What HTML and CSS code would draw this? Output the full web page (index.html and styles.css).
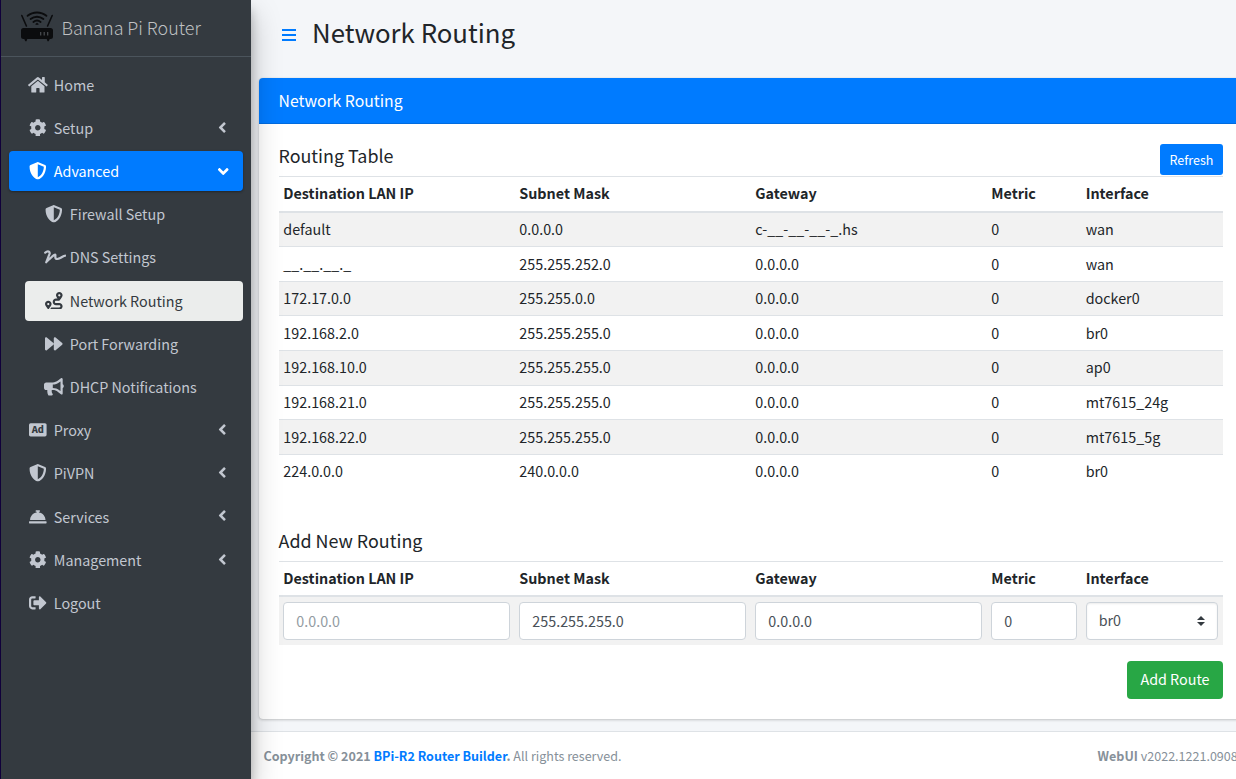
FILE: index.html
```html
<!DOCTYPE html>
<html lang="en">
<head>
<meta charset="utf-8">
<title>Network Routing</title>
<link rel="stylesheet" href="styles.css">
</head>
<body>
<svg class="sprite" aria-hidden="true">
  <symbol id="cog" viewBox="0 0 512 512"><path d="M487.4 315.7l-42.6-24.6c4.3-23.2 4.3-47 0-70.2l42.6-24.6c4.9-2.8 7.1-8.6 5.5-14-11.1-35.6-30-67.8-54.7-94.6-3.8-4.1-10-5.1-14.8-2.3L380.8 110c-17.9-15.4-38.5-27.3-60.8-35.1V25.8c0-5.6-3.9-10.5-9.4-11.7-36.7-8.2-74.3-7.8-109.2 0-5.5 1.2-9.4 6.1-9.4 11.7V75c-22.2 7.9-42.8 19.8-60.8 35.1L88.7 85.5c-4.9-2.8-11-1.9-14.8 2.3-24.7 26.7-43.6 58.9-54.7 94.6-1.7 5.4.6 11.2 5.5 14L67.3 221c-4.3 23.2-4.3 47 0 70.2l-42.6 24.6c-4.9 2.8-7.1 8.6-5.5 14 11.1 35.6 30 67.8 54.7 94.6 3.8 4.1 10 5.1 14.8 2.3l42.6-24.6c17.9 15.4 38.5 27.3 60.8 35.1v49.2c0 5.6 3.9 10.5 9.4 11.7 36.7 8.2 74.3 7.8 109.2 0 5.5-1.2 9.4-6.1 9.4-11.7v-49.2c22.2-7.9 42.8-19.8 60.8-35.1l42.6 24.6c4.9 2.8 11 1.9 14.8-2.3 24.7-26.7 43.6-58.9 54.7-94.6 1.5-5.5-.7-11.3-5.6-14.1zM256 336c-44.1 0-80-35.9-80-80s35.9-80 80-80 80 35.9 80 80-35.9 80-80 80z"/></symbol>
  <symbol id="shield" viewBox="0 0 512 512"><path d="M466.5 83.7l-192-80a48.15 48.15 0 0 0-36.9 0l-192 80C27.7 91.1 16 108.6 16 128c0 198.5 114.5 335.7 221.5 380.3 11.8 4.9 25.1 4.9 36.9 0C360.1 472.6 496 349.3 496 128c0-19.4-11.7-36.9-29.5-44.3zM256.1 446.3l-.1-381 175.9 73.3c-3.3 151.4-82.1 261.1-175.8 307.7z"/></symbol>
  <symbol id="angle" viewBox="0 0 256 512"><path d="M31.7 239l136-136c9.4-9.4 24.6-9.4 33.9 0l22.6 22.6c9.4 9.4 9.4 24.6 0 33.9L127.9 256l96.4 96.4c9.4 9.4 9.4 24.6 0 33.9L201.7 409c-9.4 9.4-24.6 9.4-33.9 0l-136-136c-9.5-9.4-9.5-24.6-.1-34z"/></symbol>
</svg>
<div class="app">
  <aside class="sidebar">
    <a class="brand">
      <svg class="logo" viewBox="0 0 34 34">
        <g fill="none" stroke="#0b0c0e" stroke-linecap="round">
          <path stroke-width="1.6" d="M1.8 5.5l4.6 10.5M32.2 5.5l-4.6 10.5"/>
          <path stroke-width="1.9" d="M7.6 5.8c5.4-4.5 13.4-4.5 18.8 0M10.6 9c3.8-3.1 9-3.1 12.8 0M13.4 12c2.1-1.7 5.1-1.7 7.2 0"/>
        </g>
        <path fill="#0b0c0e" d="M17 12.7l2 1.6-2 .8-2-.8zM3.5 18h27a2.500 2.500 0 0 1 2.500 2.500v6a2.500 2.500 0 0 1-2.500 2.500h-.8l-1 2.200h-1.200l-.8-2.200H7.300l-.8 2.200H5.300l-1-2.200h-.8A2.500 2.500 0 0 1 1 26.500v-6A2.500 2.500 0 0 1 3.500 18z"/>
        <path stroke="#4b4e53" stroke-width="1.2" d="M20.7 22v3.4M24.2 22v3.4M27.7 22v3.4"/>
      </svg>
      <span class="brand-text">Banana Pi Router</span>
    </a>
    <nav class="nav">
      <a class="item"><span class="icon"><svg class="wide" viewBox="0 0 576 512"><path d="M280.37 148.26L96 300.11V464a16 16 0 0 0 16 16l112.06-.29a16 16 0 0 0 15.92-16V368a16 16 0 0 1 16-16h64a16 16 0 0 1 16 16v95.64a16 16 0 0 0 16 16.05L464 480a16 16 0 0 0 16-16V300L295.67 148.26a12.19 12.19 0 0 0-15.3 0zM571.6 251.47L488 182.56V44.05a12 12 0 0 0-12-12h-56a12 12 0 0 0-12 12v72.61L318.47 43a48 48 0 0 0-61 0L4.34 251.47a12 12 0 0 0-1.6 16.9l25.5 31A12 12 0 0 0 45.15 301l235.22-193.74a12.19 12.19 0 0 1 15.3 0L530.9 301a12 12 0 0 0 16.9-1.6l25.5-31a12 12 0 0 0-1.7-16.93z"/></svg></span><span class="label">Home</span></a>
      <a class="item"><span class="icon"><svg><use href="#cog"/></svg></span><span class="label">Setup</span><svg class="angle"><use href="#angle"/></svg></a>
      <a class="item active"><span class="icon"><svg><use href="#shield"/></svg></span><span class="label">Advanced</span><svg class="angle open"><use href="#angle"/></svg></a>
      <div class="sub">
        <a class="item"><span class="icon"><svg><use href="#shield"/></svg></span><span class="label">Firewall Setup</span></a>
        <a class="item"><span class="icon"><svg class="xwide" viewBox="0 0 640 512"><path d="M623.2 192c-51.8 3.5-125.7 54.7-163.1 71.5-29.1 13.1-54.2 24.4-76.1 24.4-22.6 0-26-16.2-21.3-51.9 1.1-8 11.7-79.2-42.7-76.1-25.1 1.5-64.3 24.8-169.5 126L192 182.2c30.4-75.9-53.2-151.5-129.7-102.8L7.4 116.3C0 121-2.2 130.9 2.5 138.4l17.2 27c4.7 7.5 14.6 9.7 22.1 4.9l58-38.9c18.4-11.7 40.7 7.2 32.7 27.1L34.3 404.1C27.5 421 37 448 64 448c8.3 0 16.5-3.2 22.6-9.4 42.2-42.2 154.7-150.7 211.2-195.8-2.2 28.5-2.1 58.9 20.6 83.8 15.3 16.8 37.3 25.3 65.5 25.3 35.6 0 68-14.6 102.3-30 33-14.8 99-62.6 138.4-65.8 8.5-.7 15.2-7.3 15.2-15.8v-32.1c.2-9.1-7.5-16.8-16.6-16.2z"/></svg></span><span class="label">DNS Settings</span></a>
        <a class="item current"><span class="icon"><svg viewBox="0 0 512 512"><path d="M416 320h-96c-17.6 0-32-14.4-32-32s14.4-32 32-32h96s96-107 96-160-43-96-96-96-96 43-96 96c0 25.5 22.2 63.4 45.3 96H320c-52.9 0-96 43.1-96 96s43.1 96 96 96h96c17.6 0 32 14.4 32 32s-14.4 32-32 32H185.5c-16 24.8-33.8 47.7-47.3 64H416c52.9 0 96-43.1 96-96s-43.1-96-96-96zm0-256c17.7 0 32 14.3 32 32s-14.3 32-32 32-32-14.3-32-32 14.3-32 32-32zM96 256c-53 0-96 43-96 96s96 160 96 160 96-107 96-160-43-96-96-96zm0 128c-17.7 0-32-14.3-32-32s14.3-32 32-32 32 14.3 32 32-14.3 32-32 32z"/></svg></span><span class="label">Network Routing</span></a>
        <a class="item"><span class="icon"><svg viewBox="0 0 512 512"><path d="M500.5 231.4l-192-160C287.9 54.3 256 68.6 256 96v320c0 27.4 31.9 41.8 52.5 24.6l192-160c15.3-12.8 15.3-36.4 0-49.2zm-256 0l-192-160C31.9 54.3 0 68.6 0 96v320c0 27.4 31.9 41.8 52.5 24.6l192-160c15.3-12.8 15.3-36.4 0-49.2z"/></svg></span><span class="label">Port Forwarding</span></a>
        <a class="item"><span class="icon"><svg class="wide" viewBox="0 0 576 512"><path d="M576 240c0-23.63-12.95-44.04-32-55.12V32.01C544 23.26 537.02 0 512 0c-7.12 0-14.19 2.38-19.98 7.02l-85.03 68.03C364.28 109.19 310.66 128 256 128H64c-35.35 0-64 28.65-64 64v96c0 35.35 28.65 64 64 64h33.7c-1.39 10.48-2.18 21.14-2.18 32 0 39.77 9.26 77.35 25.56 110.94 5.19 10.69 16.52 17.06 28.4 17.06h74.28c26.05 0 41.69-29.84 25.9-50.56-16.4-21.52-26.15-48.36-26.15-77.44 0-11.11 1.62-21.79 4.41-32H256c54.66 0 108.28 18.81 150.98 52.95l85.03 68.03a32.023 32.023 0 0 0 19.98 7.02c24.92 0 32-22.78 32-32V295.13C563.05 284.04 576 263.63 576 240zm-96 141.42l-33.05-26.44C392.95 311.78 325.12 288 256 288v-96c69.12 0 136.95-23.78 190.95-66.98L480 98.58v282.84z"/></svg></span><span class="label">DHCP Notifications</span></a>
      </div>
      <a class="item"><span class="icon"><svg viewBox="0 0 512 512"><path d="M48 64h416a48 48 0 0 1 48 48v288a48 48 0 0 1-48 48H48a48 48 0 0 1-48-48V112a48 48 0 0 1 48-48z"/><text class="ad" x="256" y="350" text-anchor="middle">Ad</text></svg></span><span class="label">Proxy</span><svg class="angle"><use href="#angle"/></svg></a>
      <a class="item"><span class="icon"><svg><use href="#shield"/></svg></span><span class="label">PiVPN</span><svg class="angle"><use href="#angle"/></svg></a>
      <a class="item"><span class="icon"><svg viewBox="0 0 512 512"><path d="M288 130.54V112h16c8.84 0 16-7.16 16-16V80c0-8.84-7.16-16-16-16h-96c-8.84 0-16 7.16-16 16v16c0 8.84 7.16 16 16 16h16v18.54C115.49 146.11 32 239.18 32 352h448c0-112.82-83.49-205.89-192-221.46zM496 384H16c-8.84 0-16 7.16-16 16v32c0 8.84 7.16 16 16 16h480c8.84 0 16-7.16 16-16v-32c0-8.84-7.16-16-16-16z"/></svg></span><span class="label">Services</span><svg class="angle"><use href="#angle"/></svg></a>
      <a class="item"><span class="icon"><svg><use href="#cog"/></svg></span><span class="label">Management</span><svg class="angle"><use href="#angle"/></svg></a>
      <a class="item"><span class="icon"><svg viewBox="0 0 512 512"><path d="M497 273L329 441c-15 15-41 4.5-41-17v-96H152c-13.3 0-24-10.7-24-24v-96c0-13.3 10.7-24 24-24h136V88c0-21.4 25.9-32 41-17l168 168c9.3 9.4 9.3 24.6 0 34zM192 436v-40c0-6.6-5.4-12-12-12H96c-17.7 0-32-14.3-32-32V160c0-17.7 14.3-32 32-32h84c6.6 0 12-5.4 12-12V76c0-6.6-5.4-12-12-12H96c-53 0-96 43-96 96v192c0 53 43 96 96 96h84c6.6 0 12-5.4 12-12z"/></svg></span><span class="label">Logout</span></a>
    </nav>
  </aside>
  <div class="page">
    <header class="page-head">
      <a class="burger"><i></i><i></i><i></i></a>
      <h1>Network Routing</h1>
    </header>
    <main class="card">
      <div class="card-head">Network Routing</div>
      <div class="card-body">
        <div class="title-row"><h5>Routing Table</h5><button class="btn small">Refresh</button></div>
        <table>
          <thead><tr><th class="w25">Destination LAN IP</th><th class="w25">Subnet Mask</th><th class="w25">Gateway</th><th class="w10">Metric</th><th class="w15">Interface</th></tr></thead>
          <tbody>
            <tr><td>default</td><td>0.0.0.0</td><td>c-__-__-__-_.hs</td><td>0</td><td>wan</td></tr>
            <tr><td>__.__.__._</td><td>255.255.252.0</td><td>0.0.0.0</td><td>0</td><td>wan</td></tr>
            <tr><td>172.17.0.0</td><td>255.255.0.0</td><td>0.0.0.0</td><td>0</td><td>docker0</td></tr>
            <tr><td>192.168.2.0</td><td>255.255.255.0</td><td>0.0.0.0</td><td>0</td><td>br0</td></tr>
            <tr><td>192.168.10.0</td><td>255.255.255.0</td><td>0.0.0.0</td><td>0</td><td>ap0</td></tr>
            <tr><td>192.168.21.0</td><td>255.255.255.0</td><td>0.0.0.0</td><td>0</td><td>mt7615_24g</td></tr>
            <tr><td>192.168.22.0</td><td>255.255.255.0</td><td>0.0.0.0</td><td>0</td><td>mt7615_5g</td></tr>
            <tr><td>224.0.0.0</td><td>240.0.0.0</td><td>0.0.0.0</td><td>0</td><td>br0</td></tr>
          </tbody>
        </table>
        <div class="title-row second"><h5>Add New Routing</h5></div>
        <table class="form">
          <thead><tr><th class="w25">Destination LAN IP</th><th class="w25">Subnet Mask</th><th class="w25">Gateway</th><th class="w10">Metric</th><th class="w15">Interface</th></tr></thead>
          <tbody>
            <tr>
              <td><input class="field" placeholder="0.0.0.0"></td>
              <td><input class="field" value="255.255.255.0"></td>
              <td><input class="field" value="0.0.0.0"></td>
              <td><input class="field" value="0"></td>
              <td><div class="field select"><span>br0</span><svg viewBox="0 0 4 5"><path d="M2 0L0 2h4zm0 5L0 3h4z"/></svg></div></td>
            </tr>
          </tbody>
        </table>
        <div class="actions"><button class="btn green">Add Route</button></div>
      </div>
    </main>
    <footer class="footer">
      <div><b>Copyright © 2021 <a>BPi-R2 Router Builder</a>.</b> All rights reserved.</div>
      <div><b>WebUI</b> v2022.1221.0908</div>
    </footer>
  </div>
</div>
</body>
</html>
```
FILE: styles.css
```css
* { box-sizing: border-box; }
body {
  margin: 0;
  overflow: hidden;
  background: #f4f6f9;
  color: #212529;
  font: 14.33px/24px "Noto Sans CJK SC", "Noto Sans", sans-serif;
}
.sprite { display: none; }
.app { display: flex; width: 1251px; height: 779px; }

.sidebar {
  flex: none;
  position: relative;
  z-index: 2;
  width: 251px;
  border-left: 1px solid #10003a;
  background: #343a40;
  color: #c2c7d0;
  box-shadow: 0 14px 28px rgba(0,0,0,.25), 0 10px 10px rgba(0,0,0,.22);
}
.brand {
  display: flex;
  align-items: center;
  height: 57px;
  padding-left: 19px;
  border-bottom: 1px solid #4b545c;
}
.logo { width: 34px; height: 34px; margin-top: -2px; }
.brand-text { margin: -2px 0 0 7.4px; font-size: 17.9px; font-weight: 300; color: #bfc0c2; }
.nav { display: flex; flex-direction: column; gap: 3.2px; padding: 8px; }
.sub { display: flex; flex-direction: column; gap: 3.2px; padding-left: 16px; }
.item {
  display: flex;
  align-items: center;
  height: 40px;
  padding: 0 16px;
  border-radius: 4px;
}
.active { background: #007bff; color: #fff; box-shadow: 0 1px 3px rgba(0,0,0,.12), 0 1px 2px rgba(0,0,0,.24); }
.current { background: #ebedec; color: #343a40; }
.icon { display: flex; justify-content: center; width: 26.2px; margin-right: 2.6px; }
.icon svg { flex: none; width: 17.6px; height: 17.6px; margin-top: -1px; fill: currentColor; }
.icon .wide { width: 19.8px; }
.icon .xwide { width: 22px; margin-left: 1px; }
.icon .ad { font-size: 270px; font-weight: 900; fill: #343a40; }
.label { flex: 1; margin-top: -.6px; }
.angle { width: 8.5px; height: 17px; margin: -1.8px .8px 0 0; fill: currentColor; }
.open { transform: rotate(-90deg); margin: 0; }

.page { display: flex; flex-direction: column; width: 1000px; }
.page-head { display: flex; align-items: center; height: 78px; flex: none; padding: 0 0 10px 31px; }
.burger { display: flex; flex-direction: column; gap: 3px; width: 14px; margin-top: 2px; }
.burger i { height: 2px; background: #007bff; }
h1 { margin: -5px 0 0 16px; font-size: 25.8px; line-height: 35px; font-weight: 400; }
.card {
  flex: none;
  height: 641px;
  margin: 0 8px;
  border-radius: 4px;
  background: #fff;
  box-shadow: 0 0 1px rgba(0,0,0,.125), 0 1px 3px rgba(0,0,0,.2);
}
.card-head {
  height: 46px;
  padding: 11px 19.5px;
  border-bottom: 1px solid rgba(0,0,0,.125);
  border-radius: 4px 4px 0 0;
  background: #007bff;
  color: #fff;
  font-size: 15.76px;
}
.card-body { padding: 20px; }
.title-row { display: flex; justify-content: space-between; height: 32px; }
.second { margin-top: 40.5px; }
h5 { margin: -1px 0 0 -.5px; font-size: 17.9px; line-height: 24px; font-weight: 400; }
.btn {
  height: 38px;
  padding: 0 13px;
  border: 0;
  border-radius: 4px;
  color: #fff;
  font: 14.33px/24px "Noto Sans CJK SC", "Noto Sans", sans-serif;
}
.small { width: 63px; height: 31px; padding: 0; border-radius: 3px; background: #007bff; font-size: 12.54px; }
.green { width: 96px; padding: 0 0 2px; background: #28a745; }
table { width: 944px; table-layout: fixed; border-collapse: collapse; }
th, td { padding: 4.35px 4.8px 5.25px 4.3px; border-top: 1px solid #dee2e6; text-align: left; }
.form td { padding: 4.8px 4.8px 4.8px 4.3px; }
th { border-bottom: 2px solid #dee2e6; font-weight: 700; }
tbody tr:nth-child(odd) { background: #f2f2f2; }
.w25 { width: 25%; }
.w10 { width: 10%; }
.w15 { width: 15%; }
.field {
  display: block;
  width: 100%;
  height: 38px;
  padding: 5px 12px 7px;
  border: 1px solid #ced4da;
  border-radius: 4px;
  background: #fff;
  color: #495057;
  font: 14.33px/24px "Noto Sans CJK SC", "Noto Sans", sans-serif;
}
.field::placeholder { color: #939ba2; opacity: 1; }
.select { display: flex; justify-content: space-between; box-shadow: inset 0 1px 2px rgba(0,0,0,.075); }
.select svg { width: 8px; height: 10px; margin-top: 8px; fill: #343a40; }
.actions { display: flex; justify-content: flex-end; margin-top: 15.5px; }
.footer {
  display: flex;
  justify-content: space-between;
  flex: 1;
  margin-top: 12px;
  padding: 12px 13.3px 0 12.5px;
  border-top: 1px solid #dee2e6;
  background: #fff;
  color: #869099;
  font-size: 12.54px;
}
.footer a { color: #007bff; }
```
